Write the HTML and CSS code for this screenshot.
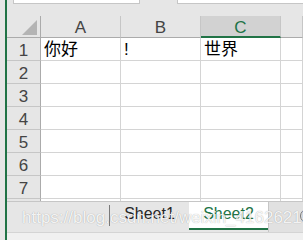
FILE: index.html
```html
<!DOCTYPE html>
<html lang="zh">
<head>
  <meta charset="UTF-8" />
  <title>Sheet</title>
  <link rel="stylesheet" href="styles.css">
</head>
<body>
  <div class="app">
    <!-- 编辑栏 -->
    <div class="topbar">
      <div class="name-box"></div>
      <div class="formula-box"></div>
    </div>

    <!-- 表格 -->
    <div class="sheet">
      <div class="corner"><span class="corner-tri"></span></div>
      <div class="col-head">A</div>
      <div class="col-head">B</div>
      <div class="col-head active">C</div>
      <div class="col-head"></div>

      <div class="row-head">1</div>
      <div class="cell">你好</div>
      <div class="cell">!</div>
      <div class="cell">世界</div>
      <div class="cell"></div>

      <div class="row-head">2</div><div class="cell"></div><div class="cell"></div><div class="cell"></div><div class="cell"></div>
      <div class="row-head">3</div><div class="cell"></div><div class="cell"></div><div class="cell"></div><div class="cell"></div>
      <div class="row-head">4</div><div class="cell"></div><div class="cell"></div><div class="cell"></div><div class="cell"></div>
      <div class="row-head">5</div><div class="cell"></div><div class="cell"></div><div class="cell"></div><div class="cell"></div>
      <div class="row-head">6</div><div class="cell"></div><div class="cell"></div><div class="cell"></div><div class="cell"></div>
      <div class="row-head">7</div><div class="cell"></div><div class="cell"></div><div class="cell"></div><div class="cell"></div>
      <div class="row-head"></div><div class="cell"></div><div class="cell"></div><div class="cell"></div><div class="cell"></div>
    </div>

    <!-- 工作表标签 -->
    <div class="tabbar">
      <div class="tab-nav"><span class="tab-sep"></span></div>
      <div class="tab">Sheet1</div>
      <div class="tab active">Sheet2</div>
      <div class="tab-add"><span class="add-circle"></span></div>
    </div>
    <div class="statusbar"></div>

    <div class="watermark">https://blog.csdn.net/weixin_41626215</div>
  </div>
</body>
</html>
```

FILE: styles.css
```css
body {
  margin: 0;
  padding: 0;
  background: #e6e6e6;
  font-family: "Liberation Sans", "Noto Sans CJK SC", sans-serif;
  overflow: hidden;
}

.app {
  position: relative;
  width: 298px;
  height: 240px;
  box-sizing: border-box;
  margin-left: 5px;
  border-left: 2px solid #217346;
  display: flex;
  flex-direction: column;
  overflow: hidden;
}

/* 编辑栏 */
.topbar {
  height: 16px;
  flex: none;
  display: flex;
  align-items: flex-start;
  padding-left: 6px;
}
.name-box,
.formula-box {
  height: 3px;
  background: #fff;
  border: 1px solid #c6c6c6;
  border-top: none;
}
.name-box {
  width: 125px;
}
.formula-box {
  flex: 1;
  margin-left: 37px;
  border-right: none;
}

/* 表格区域 */
.sheet {
  flex: none;
  height: 185px;
  display: grid;
  grid-template-columns: 34px 80px 80px 80px 1fr;
  grid-template-rows: 22px;
  grid-auto-rows: 23px;
  background: #fff;
  overflow: hidden;
  font-size: 17px;
}
.corner {
  background: #e6e6e6;
  border-right: 1px solid #ababab;
  border-bottom: 1px solid #ababab;
  display: flex;
  justify-content: flex-end;
  align-items: flex-end;
  padding: 0 3px 2px 0;
}
.corner-tri {
  width: 0;
  height: 0;
  border-left: 15px solid transparent;
  border-bottom: 15px solid #b4b4b4;
}
.col-head {
  background: #e6e6e6;
  border-right: 1px solid #c6c6c6;
  border-bottom: 1px solid #ababab;
  color: #444;
  text-align: center;
  line-height: 24px;
}
.col-head.active {
  background: #d2d2d2;
  color: #217346;
  border-bottom: 2px solid #217346;
  line-height: 23px;
}
.row-head {
  background: #e6e6e6;
  border-right: 1px solid #ababab;
  border-bottom: 1px solid #c6c6c6;
  color: #444;
  text-align: center;
  line-height: 26px;
}
.cell {
  border-right: 1px solid #d4d4d4;
  border-bottom: 1px solid #d4d4d4;
  padding-left: 3px;
  line-height: 23px;
  color: #000;
}

/* 工作表标签 */
.tabbar {
  height: 30px;
  flex: none;
  display: flex;
  align-items: flex-start;
  border-top: 1px solid #c6c6c6;
  background: #e6e6e6;
  font-size: 16px;
}
.tab-nav {
  width: 103px;
  height: 26px;
  display: flex;
  justify-content: flex-end;
  align-items: center;
}
.tab-sep {
  width: 1px;
  height: 21px;
  background: #7a7a7a;
}
.tab {
  width: 79px;
  height: 26px;
  line-height: 24px;
  text-align: center;
  color: #262626;
}
.tab.active {
  background: #fff;
  color: #217346;
  border-bottom: 2px solid #217346;
}
.tab-add {
  flex: 1;
  height: 30px;
  box-sizing: border-box;
  border-left: 1px solid #c6c6c6;
  background: #e1e1e1;
  display: flex;
  align-items: center;
  justify-content: flex-end;
  overflow: hidden;
}
.add-circle {
  flex: none;
  width: 12px;
  height: 12px;
  border: 1px solid #777;
  border-radius: 50%;
  margin-right: -11px;
  margin-top: -2px;
}
.statusbar {
  flex: 1;
  background: #f0f0f0;
  border-top: 1px solid #d4d4d4;
}

/* 水印 */
.watermark {
  position: absolute;
  left: 15px;
  top: 208px;
  font-size: 17px;
  color: rgba(255, 255, 255, 0.9);
  text-shadow: 0 0 1px rgba(0, 0, 0, 0.35);
  white-space: nowrap;
  pointer-events: none;
}
```
